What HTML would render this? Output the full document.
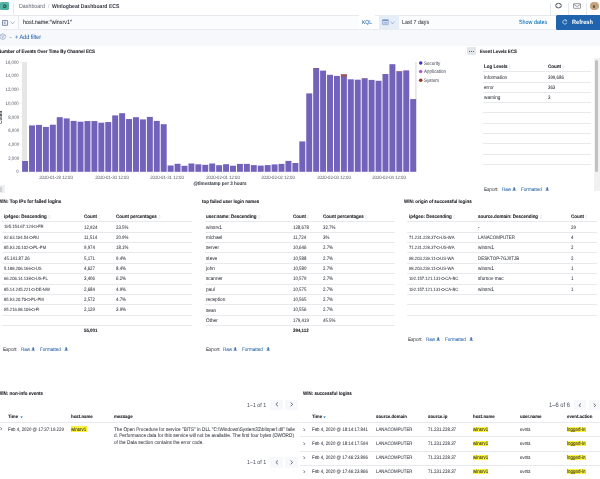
<!DOCTYPE html><html><head><meta charset="utf-8"><style>
html,body{margin:0;padding:0;}
html{background:#fff;}
body{width:600px;height:479px;overflow:hidden;position:relative;font-family:"Liberation Sans",sans-serif;text-rendering:geometricPrecision;}
#root{position:absolute;left:0;top:0;width:600px;height:479px;will-change:transform;}
.t{position:absolute;white-space:nowrap;}
.b{position:absolute;}
</style></head><body><div id="root">
<div class="b" style="left:0.00px;top:0.00px;width:600.00px;height:15.00px;background:#fff;"></div>
<div class="b" style="left:0.00px;top:15.00px;width:600.00px;height:1.00px;background:#e6e9ee;"></div>
<div class="b" style="left:0.00px;top:1.60px;width:8.75px;height:8.70px;background:#50b3a3;border-radius:1.3px;"></div>
<div class="t" style="left:-145.30px;width:300px;text-align:center;top:2.00px;line-height:10px;font-size:5.06px;color:#1a1c21;font-weight:700;transform:scaleX(0.9091);transform-origin:center center;">D</div>
<div class="b" style="left:13.10px;top:2.50px;width:0.65px;height:12.10px;background:#e4e8ef;"></div>
<div class="t" style="left:19.00px;top:2.00px;line-height:10px;font-size:5.94px;color:#69707d;-webkit-text-stroke:0.04px currentColor;transform:scaleX(0.8929);transform-origin:left center;">Dashboard</div>
<div class="t" style="left:47.60px;top:2.00px;line-height:10px;font-size:5.94px;color:#c2c7d0;-webkit-text-stroke:0.04px currentColor;transform:scaleX(0.8929);transform-origin:left center;">/</div>
<div class="t" style="left:51.90px;top:2.00px;line-height:10px;font-size:5.61px;color:#343741;font-weight:700;transform:scaleX(0.9091);transform-origin:left center;">Winlogbeat Dashboard ECS</div>
<div class="b" style="left:549.50px;top:2.50px;width:0.60px;height:12.10px;background:#e4e8ef;"></div>
<div class="b" style="left:567.50px;top:2.50px;width:0.60px;height:12.10px;background:#e4e8ef;"></div>
<div class="b" style="left:585.50px;top:2.50px;width:0.60px;height:12.10px;background:#e4e8ef;"></div>
<svg class="b" style="left:554px;top:2px" width="9" height="7" viewBox="0 0 9 7"><ellipse cx="4.5" cy="3.6" rx="2.9" ry="2.3" fill="none" stroke="#343741" stroke-width="0.8"/><path d="M2.2 2.3 L3.3 3 M6.8 2.3 L5.7 3 M2.2 4.9 L3.3 4.2 M6.8 4.9 L5.7 4.2" stroke="#343741" stroke-width="0.4"/></svg>
<svg class="b" style="left:572.5px;top:2.6px" width="8.4" height="6.4" viewBox="0 0 8.4 6.4"><rect x="0.6" y="0.7" width="7" height="4.6" rx="0.5" fill="none" stroke="#3f434c" stroke-width="0.55"/><polyline points="0.8,1.3 4.1,3.6 7.4,1.3" fill="none" stroke="#3f434c" stroke-width="0.55"/></svg>
<div class="b" style="left:589.90px;top:1.50px;width:8.80px;height:8.80px;background:#c4a37c;border-radius:50%;"></div>
<div class="t" style="left:444.30px;width:300px;text-align:center;top:2.00px;line-height:10px;font-size:5.15px;color:#1a1c21;-webkit-text-stroke:0.04px currentColor;transform:scaleX(0.8929);transform-origin:center center;">e</div>
<div class="b" style="left:0.00px;top:16.00px;width:600.00px;height:13.00px;background:#fff;"></div>
<div class="b" style="left:0.00px;top:16.00px;width:375.20px;height:13.00px;background:#fbfcfd;"></div>
<div class="b" style="left:0.00px;top:29.00px;width:600.00px;height:1.00px;background:#e9ecf0;"></div>
<div class="b" style="left:18.10px;top:15.40px;width:0.65px;height:13.20px;background:#e4e8ef;"></div>
<svg class="b" style="left:2px;top:19.6px" width="7" height="6" viewBox="0 0 7 6"><path d="M0.55 0.55 H5.6 V5.3 H0.55 Z" fill="none" stroke="#6a7ea6" stroke-width="0.9"/><path d="M2.3 1.6 L2.3 4.2 M2.3 3 L3.9 1.6 M2.6 2.8 L4.0 4.2" stroke="#6a7ea6" stroke-width="0.6" fill="none"/></svg>
<svg class="b" style="left:10px;top:20.8px" width="5" height="3.5" viewBox="0 0 5 3.5"><polyline points="0.5,0.6 2.5,2.8 4.5,0.6" fill="none" stroke="#6f87b0" stroke-width="0.6"/></svg>
<div class="t" style="left:22.90px;top:18.00px;line-height:10px;font-size:6.05px;color:#1a1c21;-webkit-text-stroke:0.04px currentColor;transform:scaleX(0.8929);transform-origin:left center;">host.name:&quot;winsrv1&quot;</div>
<div class="b" style="left:358.50px;top:15.40px;width:16.70px;height:13.20px;background:#fff;"></div>
<div class="t" style="left:216.90px;width:300px;text-align:center;top:18.00px;line-height:10px;font-size:5.6px;color:#2d6db0;-webkit-text-stroke:0.04px currentColor;transform:scaleX(0.8929);transform-origin:center center;">KQL</div>
<div class="b" style="left:378.50px;top:15.20px;width:20.50px;height:14.00px;background:#e6edf6;"></div>
<svg class="b" style="left:381.7px;top:19.3px" width="7" height="6.4" viewBox="0 0 7 6.4"><rect x="0.5" y="0.7" width="5.8" height="5" rx="0.4" fill="#d3dff0" stroke="#7497c6" stroke-width="0.6"/><rect x="0.5" y="0.7" width="5.8" height="1.3" fill="#7497c6"/><rect x="1.6" y="2.9" width="3.6" height="1.8" fill="#a9c0e0"/></svg>
<svg class="b" style="left:390px;top:20.8px" width="5" height="3.5" viewBox="0 0 5 3.5"><polyline points="0.5,0.6 2.5,2.8 4.5,0.6" fill="none" stroke="#6b8fc4" stroke-width="0.6"/></svg>
<div class="b" style="left:399.00px;top:16.00px;width:151.00px;height:13.00px;background:#fbfcfd;"></div>
<div class="t" style="left:401.70px;top:18.00px;line-height:10px;font-size:5.94px;color:#343741;-webkit-text-stroke:0.04px currentColor;transform:scaleX(0.8929);transform-origin:left center;">Last 7 days</div>
<div class="t" style="left:518.50px;top:18.00px;line-height:10px;font-size:6.05px;color:#006bb4;-webkit-text-stroke:0.04px currentColor;transform:scaleX(0.8929);transform-origin:left center;">Show dates</div>
<div class="b" style="left:556.00px;top:15.00px;width:46.00px;height:14.60px;background:#1f64ad;border-radius:1.6px;"></div>
<svg class="b" style="left:562.3px;top:19.3px" width="6" height="6" viewBox="0 0 6 6"><path d="M4.7 1.9 A2.1 2.1 0 1 0 4.9 3.6" fill="none" stroke="#fff" stroke-width="0.65"/><path d="M3.5 0.7 L4.9 1.8 L3.5 2.4" fill="none" stroke="#fff" stroke-width="0.55"/></svg>
<div class="t" style="left:571.70px;top:18.00px;line-height:10px;font-size:6.16px;color:#fff;font-weight:700;transform:scaleX(0.9091);transform-origin:left center;">Refresh</div>
<div class="b" style="left:0.00px;top:30.00px;width:600.00px;height:16.00px;background:#f7f8fb;"></div>
<svg class="b" style="left:-1px;top:33px" width="8" height="8" viewBox="0 0 8 8"><circle cx="3.8" cy="3.6" r="2.8" fill="none" stroke="#7d93b8" stroke-width="0.6"/><path d="M2.3 2.6 L5.3 2.6 L4.1 3.9 L4.1 5.2 L3.5 5.2 L3.5 3.9 Z" fill="none" stroke="#7d93b8" stroke-width="0.45"/></svg>
<div class="b" style="left:9.00px;top:36.60px;width:2.60px;height:0.30px;background:#c9d0da;"></div>
<div class="t" style="left:15.00px;top:33.00px;line-height:10px;font-size:6.16px;color:#2a64ab;-webkit-text-stroke:0.04px currentColor;transform:scaleX(0.8929);transform-origin:left center;">+ Add filter</div>
<div class="b" style="left:0.00px;top:46.00px;width:600.00px;height:433.00px;background:#fff;"></div>
<div class="t" style="left:-2.00px;top:48.00px;line-height:10px;font-size:4.9px;color:#1a1c21;font-weight:700;-webkit-text-stroke:0.08px currentColor;transform:scaleX(0.9091);transform-origin:left center;">Number of Events Over Time By Channel ECS</div>
<svg class="b" style="left:0;top:0" width="600" height="200" viewBox="0 0 600 200"><rect x="22.0" y="62.1" width="5.0" height="109.70" fill="#e6e6e6"/><rect x="415.1" y="62.1" width="1.6" height="109.70" fill="#e6e6e6"/><rect x="20.1" y="171.55" width="1.3" height="0.5" fill="#d6d6d6"/><rect x="20.1" y="157.84" width="1.3" height="0.5" fill="#d6d6d6"/><rect x="20.1" y="144.12" width="1.3" height="0.5" fill="#d6d6d6"/><rect x="20.1" y="130.41" width="1.3" height="0.5" fill="#d6d6d6"/><rect x="20.1" y="116.70" width="1.3" height="0.5" fill="#d6d6d6"/><rect x="20.1" y="102.99" width="1.3" height="0.5" fill="#d6d6d6"/><rect x="20.1" y="89.28" width="1.3" height="0.5" fill="#d6d6d6"/><rect x="20.1" y="75.56" width="1.3" height="0.5" fill="#d6d6d6"/><rect x="20.1" y="61.85" width="1.3" height="0.5" fill="#d6d6d6"/><rect x="56.20" y="171.80" width="0.5" height="1.2" fill="#d6d6d6"/><rect x="111.64" y="171.80" width="0.5" height="1.2" fill="#d6d6d6"/><rect x="167.08" y="171.80" width="0.5" height="1.2" fill="#d6d6d6"/><rect x="222.52" y="171.80" width="0.5" height="1.2" fill="#d6d6d6"/><rect x="277.96" y="171.80" width="0.5" height="1.2" fill="#d6d6d6"/><rect x="333.40" y="171.80" width="0.5" height="1.2" fill="#d6d6d6"/><rect x="388.84" y="171.80" width="0.5" height="1.2" fill="#d6d6d6"/><rect x="22.12" y="161.00" width="5.96" height="10.80" fill="#7262ba"/><rect x="29.05" y="125.40" width="5.96" height="46.40" fill="#7262ba"/><rect x="35.98" y="124.90" width="5.96" height="46.90" fill="#7262ba"/><rect x="42.91" y="126.90" width="5.96" height="44.90" fill="#7262ba"/><rect x="49.84" y="124.70" width="5.96" height="47.10" fill="#7262ba"/><rect x="56.77" y="117.20" width="5.96" height="54.60" fill="#7262ba"/><rect x="63.70" y="118.40" width="5.96" height="53.40" fill="#7262ba"/><rect x="70.63" y="120.90" width="5.96" height="50.90" fill="#7262ba"/><rect x="77.56" y="121.70" width="5.96" height="50.10" fill="#7262ba"/><rect x="84.49" y="121.05" width="5.96" height="50.75" fill="#7262ba"/><rect x="91.42" y="121.05" width="5.96" height="50.75" fill="#7262ba"/><rect x="98.35" y="122.70" width="5.96" height="49.10" fill="#7262ba"/><rect x="105.28" y="122.05" width="5.96" height="49.75" fill="#7262ba"/><rect x="112.21" y="115.40" width="5.96" height="56.40" fill="#7262ba"/><rect x="119.14" y="113.20" width="5.96" height="58.60" fill="#7262ba"/><rect x="126.07" y="119.05" width="5.96" height="52.75" fill="#7262ba"/><rect x="133.00" y="117.20" width="5.96" height="54.60" fill="#7262ba"/><rect x="139.93" y="119.40" width="5.96" height="52.40" fill="#7262ba"/><rect x="146.86" y="116.90" width="5.96" height="54.90" fill="#7262ba"/><rect x="153.79" y="120.90" width="5.96" height="50.90" fill="#7262ba"/><rect x="160.72" y="124.20" width="5.96" height="47.60" fill="#7262ba"/><rect x="167.65" y="165.50" width="5.96" height="6.30" fill="#7262ba"/><rect x="174.58" y="163.80" width="5.96" height="8.00" fill="#7262ba"/><rect x="181.51" y="165.80" width="5.96" height="6.00" fill="#7262ba"/><rect x="188.44" y="163.50" width="5.96" height="8.30" fill="#7262ba"/><rect x="195.37" y="164.30" width="5.96" height="7.50" fill="#7262ba"/><rect x="202.30" y="164.80" width="5.96" height="7.00" fill="#7262ba"/><rect x="209.23" y="163.50" width="5.96" height="8.30" fill="#7262ba"/><rect x="216.16" y="165.20" width="5.96" height="6.60" fill="#7262ba"/><rect x="223.09" y="164.20" width="5.96" height="7.60" fill="#7262ba"/><rect x="230.02" y="165.70" width="5.96" height="6.10" fill="#7262ba"/><rect x="236.95" y="163.90" width="5.96" height="7.90" fill="#7262ba"/><rect x="243.88" y="163.90" width="5.96" height="7.90" fill="#7262ba"/><rect x="250.81" y="165.10" width="5.96" height="6.70" fill="#7262ba"/><rect x="257.74" y="165.60" width="5.96" height="6.20" fill="#7262ba"/><rect x="264.67" y="165.10" width="5.96" height="6.70" fill="#7262ba"/><rect x="271.60" y="164.40" width="5.96" height="7.40" fill="#7262ba"/><rect x="278.53" y="163.90" width="5.96" height="7.90" fill="#7262ba"/><rect x="285.46" y="160.90" width="5.96" height="10.90" fill="#7262ba"/><rect x="292.39" y="163.00" width="5.96" height="8.80" fill="#7262ba"/><rect x="299.32" y="141.40" width="5.96" height="30.40" fill="#7262ba"/><rect x="306.25" y="93.40" width="5.96" height="78.40" fill="#7262ba"/><rect x="313.18" y="68.00" width="5.96" height="103.80" fill="#7262ba"/><rect x="320.11" y="70.65" width="5.96" height="101.15" fill="#7262ba"/><rect x="327.04" y="74.80" width="5.96" height="97.00" fill="#7262ba"/><rect x="333.97" y="75.90" width="5.96" height="95.90" fill="#7262ba"/><rect x="340.90" y="74.30" width="5.96" height="97.50" fill="#7262ba"/><rect x="347.83" y="79.30" width="5.96" height="92.50" fill="#7262ba"/><rect x="354.76" y="79.70" width="5.96" height="92.10" fill="#7262ba"/><rect x="361.69" y="78.30" width="5.96" height="93.50" fill="#7262ba"/><rect x="368.62" y="79.90" width="5.96" height="91.90" fill="#7262ba"/><rect x="375.55" y="80.80" width="5.96" height="91.00" fill="#7262ba"/><rect x="382.48" y="74.00" width="5.96" height="97.80" fill="#7262ba"/><rect x="389.41" y="64.20" width="5.96" height="107.60" fill="#7262ba"/><rect x="396.34" y="71.25" width="5.96" height="100.55" fill="#7262ba"/><rect x="403.27" y="70.40" width="5.96" height="101.40" fill="#7262ba"/><rect x="410.20" y="99.10" width="5.96" height="72.70" fill="#7262ba"/><rect x="340.90" y="74.50" width="5.96" height="2.00" fill="#a85545"/><rect x="313.18" y="68.00" width="5.96" height="0.40" fill="#a85545"/><rect x="361.69" y="78.30" width="5.96" height="0.35" fill="#a85545"/><rect x="396.34" y="71.25" width="5.96" height="0.35" fill="#a85545"/><circle cx="420.7" cy="62.9" r="1.75" fill="#4a2fb5"/><circle cx="420.7" cy="71.5" r="1.75" fill="#b15dc9"/><circle cx="420.7" cy="80.2" r="1.75" fill="#9b3128"/></svg>
<div class="t" style="right:581.10px;top:59.00px;line-height:10px;font-size:4.82px;color:#696e79;-webkit-text-stroke:0.04px currentColor;transform:scaleX(0.8929);transform-origin:right center;">16,000</div>
<div class="t" style="right:581.10px;top:72.00px;line-height:10px;font-size:4.82px;color:#696e79;-webkit-text-stroke:0.04px currentColor;transform:scaleX(0.8929);transform-origin:right center;">14,000</div>
<div class="t" style="right:581.10px;top:86.00px;line-height:10px;font-size:4.82px;color:#696e79;-webkit-text-stroke:0.04px currentColor;transform:scaleX(0.8929);transform-origin:right center;">12,000</div>
<div class="t" style="right:581.10px;top:100.00px;line-height:10px;font-size:4.82px;color:#696e79;-webkit-text-stroke:0.04px currentColor;transform:scaleX(0.8929);transform-origin:right center;">10,000</div>
<div class="t" style="right:581.10px;top:114.00px;line-height:10px;font-size:4.82px;color:#696e79;-webkit-text-stroke:0.04px currentColor;transform:scaleX(0.8929);transform-origin:right center;">8,000</div>
<div class="t" style="right:581.10px;top:127.00px;line-height:10px;font-size:4.82px;color:#696e79;-webkit-text-stroke:0.04px currentColor;transform:scaleX(0.8929);transform-origin:right center;">6,000</div>
<div class="t" style="right:581.10px;top:141.00px;line-height:10px;font-size:4.82px;color:#696e79;-webkit-text-stroke:0.04px currentColor;transform:scaleX(0.8929);transform-origin:right center;">4,000</div>
<div class="t" style="right:581.10px;top:155.00px;line-height:10px;font-size:4.82px;color:#696e79;-webkit-text-stroke:0.04px currentColor;transform:scaleX(0.8929);transform-origin:right center;">2,000</div>
<div class="t" style="right:581.10px;top:168.00px;line-height:10px;font-size:4.82px;color:#696e79;-webkit-text-stroke:0.04px currentColor;transform:scaleX(0.8929);transform-origin:right center;">0</div>
<div class="t" style="left:-93.55px;width:300px;text-align:center;top:174.00px;line-height:10px;font-size:4.78px;color:#696e79;-webkit-text-stroke:0.04px currentColor;transform:scaleX(0.8929);transform-origin:center center;">2020-01-29 12:00</div>
<div class="t" style="left:-38.11px;width:300px;text-align:center;top:174.00px;line-height:10px;font-size:4.78px;color:#696e79;-webkit-text-stroke:0.04px currentColor;transform:scaleX(0.8929);transform-origin:center center;">2020-01-30 12:00</div>
<div class="t" style="left:17.33px;width:300px;text-align:center;top:174.00px;line-height:10px;font-size:4.78px;color:#696e79;-webkit-text-stroke:0.04px currentColor;transform:scaleX(0.8929);transform-origin:center center;">2020-01-31 12:00</div>
<div class="t" style="left:72.77px;width:300px;text-align:center;top:174.00px;line-height:10px;font-size:4.78px;color:#696e79;-webkit-text-stroke:0.04px currentColor;transform:scaleX(0.8929);transform-origin:center center;">2020-02-01 12:00</div>
<div class="t" style="left:128.21px;width:300px;text-align:center;top:174.00px;line-height:10px;font-size:4.78px;color:#696e79;-webkit-text-stroke:0.04px currentColor;transform:scaleX(0.8929);transform-origin:center center;">2020-02-02 12:00</div>
<div class="t" style="left:183.65px;width:300px;text-align:center;top:174.00px;line-height:10px;font-size:4.78px;color:#696e79;-webkit-text-stroke:0.04px currentColor;transform:scaleX(0.8929);transform-origin:center center;">2020-02-03 12:00</div>
<div class="t" style="left:239.09px;width:300px;text-align:center;top:174.00px;line-height:10px;font-size:4.78px;color:#696e79;-webkit-text-stroke:0.04px currentColor;transform:scaleX(0.8929);transform-origin:center center;">2020-02-04 12:00</div>
<div class="t" style="left:69.50px;width:300px;text-align:center;top:179.00px;line-height:10px;font-size:5.0px;color:#454a55;font-weight:700;-webkit-text-stroke:0.08px currentColor;transform:scaleX(0.9091);transform-origin:center center;">@timestamp per 3 hours</div>
<svg class="b" style="left:0;top:100px" width="10" height="30" viewBox="0 0 10 30"><text x="0" y="0" transform="translate(2.3 17.2) rotate(-90)" text-anchor="middle" font-family="Liberation Sans" font-weight="700" font-size="4.5" fill="#343741">Count</text></svg>
<div class="t" style="left:424.00px;top:59.00px;line-height:10px;font-size:5.06px;color:#535966;-webkit-text-stroke:0.04px currentColor;transform:scaleX(0.8929);transform-origin:left center;">Security</div>
<div class="t" style="left:424.00px;top:67.00px;line-height:10px;font-size:5.06px;color:#535966;-webkit-text-stroke:0.04px currentColor;transform:scaleX(0.8929);transform-origin:left center;">Application</div>
<div class="t" style="left:424.00px;top:76.00px;line-height:10px;font-size:5.06px;color:#535966;-webkit-text-stroke:0.04px currentColor;transform:scaleX(0.8929);transform-origin:left center;">System</div>
<div class="b" style="left:467.00px;top:46.90px;width:8.75px;height:8.50px;background:#e3e6eb;border-radius:0.8px;"></div>
<div class="b" style="left:468.90px;top:50.55px;width:1.40px;height:1.30px;background:#535966;border-radius:0.3px;"></div>
<div class="b" style="left:470.80px;top:50.55px;width:1.40px;height:1.30px;background:#535966;border-radius:0.3px;"></div>
<div class="b" style="left:472.70px;top:50.55px;width:1.40px;height:1.30px;background:#535966;border-radius:0.3px;"></div>
<div class="b" style="left:0.00px;top:185.00px;width:5.00px;height:8.40px;background:#eceef2;border-radius:0.8px;"></div>
<div class="b" style="left:0.00px;top:186.80px;width:2.20px;height:4.80px;background:#cdd1d8;"></div>
<div class="t" style="left:479.80px;top:48.00px;line-height:10px;font-size:4.8px;color:#1a1c21;font-weight:700;-webkit-text-stroke:0.08px currentColor;transform:scaleX(0.9091);transform-origin:left center;">Event Levels ECS</div>
<div class="t" style="left:484.20px;top:63.00px;line-height:10px;font-size:4.95px;color:#1a1c21;font-weight:700;-webkit-text-stroke:0.08px currentColor;transform:scaleX(0.9091);transform-origin:left center;">Log Levels</div>
<svg class="b" style="left:509.01px;top:64.60px" width="2.4" height="4" viewBox="0 0 2.4 4"><path d="M0.3 1.5 L1.2 0.5 L2.1 1.5 M0.3 2.5 L1.2 3.5 L2.1 2.5" fill="none" stroke="#b3b9c2" stroke-width="0.45"/></svg>
<div class="t" style="left:548.00px;top:63.00px;line-height:10px;font-size:4.95px;color:#1a1c21;font-weight:700;-webkit-text-stroke:0.08px currentColor;transform:scaleX(0.9091);transform-origin:left center;">Count</div>
<svg class="b" style="left:562.29px;top:64.60px" width="2.4" height="4" viewBox="0 0 2.4 4"><path d="M0.3 1.5 L1.2 0.5 L2.1 1.5 M0.3 2.5 L1.2 3.5 L2.1 2.5" fill="none" stroke="#b3b9c2" stroke-width="0.45"/></svg>
<div class="b" style="left:482.60px;top:71.32px;width:108.30px;height:0.55px;background:#e7e9ed;"></div>
<div class="b" style="left:482.60px;top:81.61px;width:108.30px;height:0.55px;background:#e7e9ed;"></div>
<div class="b" style="left:482.60px;top:91.90px;width:108.30px;height:0.55px;background:#e7e9ed;"></div>
<div class="b" style="left:482.60px;top:102.19px;width:108.30px;height:0.55px;background:#e7e9ed;"></div>
<div class="b" style="left:482.60px;top:112.48px;width:108.30px;height:0.55px;background:#e7e9ed;"></div>
<div class="b" style="left:482.60px;top:122.77px;width:108.30px;height:0.55px;background:#e7e9ed;"></div>
<div class="b" style="left:482.60px;top:133.06px;width:108.30px;height:0.55px;background:#e7e9ed;"></div>
<div class="b" style="left:482.60px;top:143.35px;width:108.30px;height:0.55px;background:#e7e9ed;"></div>
<div class="b" style="left:482.60px;top:153.64px;width:108.30px;height:0.55px;background:#e7e9ed;"></div>
<div class="b" style="left:482.60px;top:163.93px;width:108.30px;height:0.55px;background:#e7e9ed;"></div>
<div class="t" style="left:484.20px;top:73.00px;line-height:10px;font-size:5.26px;color:#343741;-webkit-text-stroke:0.04px currentColor;transform:scaleX(0.8929);transform-origin:left center;">information</div>
<div class="t" style="left:548.00px;top:74.00px;line-height:10px;font-size:4.93px;color:#343741;-webkit-text-stroke:0.04px currentColor;transform:scaleX(0.8929);transform-origin:left center;">399,686</div>
<div class="t" style="left:484.20px;top:83.00px;line-height:10px;font-size:5.26px;color:#343741;-webkit-text-stroke:0.04px currentColor;transform:scaleX(0.8929);transform-origin:left center;">error</div>
<div class="t" style="left:548.00px;top:84.00px;line-height:10px;font-size:4.93px;color:#343741;-webkit-text-stroke:0.04px currentColor;transform:scaleX(0.8929);transform-origin:left center;">363</div>
<div class="t" style="left:484.20px;top:93.00px;line-height:10px;font-size:5.26px;color:#343741;-webkit-text-stroke:0.04px currentColor;transform:scaleX(0.8929);transform-origin:left center;">warning</div>
<div class="t" style="left:548.00px;top:94.00px;line-height:10px;font-size:4.93px;color:#343741;-webkit-text-stroke:0.04px currentColor;transform:scaleX(0.8929);transform-origin:left center;">3</div>
<div class="t" style="left:484.00px;top:185.00px;line-height:10px;font-size:5.15px;color:#3f434c;-webkit-text-stroke:0.04px currentColor;transform:scaleX(0.8929);transform-origin:left center;">Export:</div>
<div class="t" style="left:501.60px;top:185.00px;line-height:10px;font-size:5.15px;color:#2562a8;-webkit-text-stroke:0.04px currentColor;transform:scaleX(0.8929);transform-origin:left center;">Raw</div>
<svg class="b" style="left:511.60px;top:186.70px" width="4.4" height="4.4" viewBox="0 0 4.4 4.4"><path d="M1.6 0.3 H2.8 V1.7 H3.9 L2.2 3.3 L0.5 1.7 H1.6 Z" fill="#2562a8"/><rect x="0.4" y="3.5" width="3.6" height="0.75" fill="#2562a8"/></svg>
<div class="t" style="left:520.80px;top:185.00px;line-height:10px;font-size:5.15px;color:#2562a8;-webkit-text-stroke:0.04px currentColor;transform:scaleX(0.8929);transform-origin:left center;">Formatted</div>
<svg class="b" style="left:544.60px;top:186.70px" width="4.4" height="4.4" viewBox="0 0 4.4 4.4"><path d="M1.6 0.3 H2.8 V1.7 H3.9 L2.2 3.3 L0.5 1.7 H1.6 Z" fill="#2562a8"/><rect x="0.4" y="3.5" width="3.6" height="0.75" fill="#2562a8"/></svg>
<div class="b" style="left:594.00px;top:58.10px;width:6.00px;height:133.40px;background:#f1f1f1;"></div>
<div class="b" style="left:595.30px;top:59.70px;width:3.10px;height:112.60px;background:#c1c1c1;border-radius:1.5px;"></div>
<div class="t" style="left:-2.00px;top:197.00px;line-height:10px;font-size:5.06px;color:#1a1c21;font-weight:700;-webkit-text-stroke:0.08px currentColor;transform:scaleX(0.9091);transform-origin:left center;">WIN: Top IPs for failed logins</div>
<div class="t" style="left:201.90px;top:198.00px;line-height:10px;font-size:4.87px;color:#1a1c21;font-weight:700;-webkit-text-stroke:0.08px currentColor;transform:scaleX(0.9091);transform-origin:left center;">top failed user login names</div>
<div class="t" style="left:403.90px;top:198.00px;line-height:10px;font-size:4.9px;color:#1a1c21;font-weight:700;-webkit-text-stroke:0.08px currentColor;transform:scaleX(0.9091);transform-origin:left center;">WIN: origin of successful logins</div>
<div class="t" style="left:4.20px;top:213.00px;line-height:10px;font-size:4.95px;color:#1a1c21;font-weight:700;-webkit-text-stroke:0.08px currentColor;transform:scaleX(0.9091);transform-origin:left center;">ip4geo: Descending</div>
<svg class="b" style="left:48.26px;top:214.80px" width="2.4" height="4" viewBox="0 0 2.4 4"><path d="M0.3 1.5 L1.2 0.5 L2.1 1.5 M0.3 2.5 L1.2 3.5 L2.1 2.5" fill="none" stroke="#b3b9c2" stroke-width="0.45"/></svg>
<div class="t" style="left:83.70px;top:213.00px;line-height:10px;font-size:4.95px;color:#1a1c21;font-weight:700;-webkit-text-stroke:0.08px currentColor;transform:scaleX(0.9091);transform-origin:left center;">Count</div>
<svg class="b" style="left:97.99px;top:214.80px" width="2.4" height="4" viewBox="0 0 2.4 4"><path d="M0.3 1.5 L1.2 0.5 L2.1 1.5 M0.3 2.5 L1.2 3.5 L2.1 2.5" fill="none" stroke="#b3b9c2" stroke-width="0.45"/></svg>
<div class="t" style="left:116.30px;top:213.00px;line-height:10px;font-size:4.95px;color:#1a1c21;font-weight:700;-webkit-text-stroke:0.08px currentColor;transform:scaleX(0.9091);transform-origin:left center;">Count percentages</div>
<svg class="b" style="left:158.36px;top:214.80px" width="2.4" height="4" viewBox="0 0 2.4 4"><path d="M0.3 1.5 L1.2 0.5 L2.1 1.5 M0.3 2.5 L1.2 3.5 L2.1 2.5" fill="none" stroke="#b3b9c2" stroke-width="0.45"/></svg>
<div class="b" style="left:1.75px;top:221.32px;width:189.75px;height:0.55px;background:#e7e9ed;"></div>
<div class="b" style="left:1.75px;top:231.69px;width:189.75px;height:0.55px;background:#e7e9ed;"></div>
<div class="b" style="left:1.75px;top:242.06px;width:189.75px;height:0.55px;background:#e7e9ed;"></div>
<div class="b" style="left:1.75px;top:252.43px;width:189.75px;height:0.55px;background:#e7e9ed;"></div>
<div class="b" style="left:1.75px;top:262.81px;width:189.75px;height:0.55px;background:#e7e9ed;"></div>
<div class="b" style="left:1.75px;top:273.18px;width:189.75px;height:0.55px;background:#e7e9ed;"></div>
<div class="b" style="left:1.75px;top:283.55px;width:189.75px;height:0.55px;background:#e7e9ed;"></div>
<div class="b" style="left:1.75px;top:293.92px;width:189.75px;height:0.55px;background:#e7e9ed;"></div>
<div class="b" style="left:1.75px;top:304.29px;width:189.75px;height:0.55px;background:#e7e9ed;"></div>
<div class="b" style="left:1.75px;top:314.66px;width:189.75px;height:0.55px;background:#e7e9ed;"></div>
<div class="b" style="left:1.75px;top:325.02px;width:189.75px;height:0.55px;background:#e7e9ed;"></div>
<div class="t" style="left:4.20px;top:222.00px;line-height:10px;font-size:4.7px;color:#343741;-webkit-text-stroke:0.04px currentColor;transform:scaleX(0.8929);transform-origin:left center;">195.154.67.124&lt;&gt;FR</div>
<div class="t" style="left:83.70px;top:224.00px;line-height:10px;font-size:4.93px;color:#343741;-webkit-text-stroke:0.04px currentColor;transform:scaleX(0.8929);transform-origin:left center;">12,924</div>
<div class="t" style="left:116.30px;top:224.00px;line-height:10px;font-size:4.93px;color:#343741;-webkit-text-stroke:0.04px currentColor;transform:scaleX(0.8929);transform-origin:left center;">23.5%</div>
<div class="t" style="left:4.20px;top:233.00px;line-height:10px;font-size:4.7px;color:#343741;-webkit-text-stroke:0.04px currentColor;transform:scaleX(0.8929);transform-origin:left center;">92.63.194.54&lt;&gt;RU</div>
<div class="t" style="left:83.70px;top:234.00px;line-height:10px;font-size:4.93px;color:#343741;-webkit-text-stroke:0.04px currentColor;transform:scaleX(0.8929);transform-origin:left center;">11,514</div>
<div class="t" style="left:116.30px;top:234.00px;line-height:10px;font-size:4.93px;color:#343741;-webkit-text-stroke:0.04px currentColor;transform:scaleX(0.8929);transform-origin:left center;">20.9%</div>
<div class="t" style="left:4.20px;top:243.00px;line-height:10px;font-size:4.7px;color:#343741;-webkit-text-stroke:0.04px currentColor;transform:scaleX(0.8929);transform-origin:left center;">85.93.20.102&lt;&gt;PL-PM</div>
<div class="t" style="left:83.70px;top:244.00px;line-height:10px;font-size:4.93px;color:#343741;-webkit-text-stroke:0.04px currentColor;transform:scaleX(0.8929);transform-origin:left center;">9,974</div>
<div class="t" style="left:116.30px;top:244.00px;line-height:10px;font-size:4.93px;color:#343741;-webkit-text-stroke:0.04px currentColor;transform:scaleX(0.8929);transform-origin:left center;">18.1%</div>
<div class="t" style="left:4.20px;top:255.00px;line-height:10px;font-size:4.93px;color:#343741;-webkit-text-stroke:0.04px currentColor;transform:scaleX(0.8929);transform-origin:left center;">45.141.87.26</div>
<div class="t" style="left:83.70px;top:255.00px;line-height:10px;font-size:4.93px;color:#343741;-webkit-text-stroke:0.04px currentColor;transform:scaleX(0.8929);transform-origin:left center;">5,171</div>
<div class="t" style="left:116.30px;top:255.00px;line-height:10px;font-size:4.93px;color:#343741;-webkit-text-stroke:0.04px currentColor;transform:scaleX(0.8929);transform-origin:left center;">9.4%</div>
<div class="t" style="left:4.20px;top:264.00px;line-height:10px;font-size:4.7px;color:#343741;-webkit-text-stroke:0.04px currentColor;transform:scaleX(0.8929);transform-origin:left center;">5.188.206.166&lt;&gt;US</div>
<div class="t" style="left:83.70px;top:265.00px;line-height:10px;font-size:4.93px;color:#343741;-webkit-text-stroke:0.04px currentColor;transform:scaleX(0.8929);transform-origin:left center;">4,627</div>
<div class="t" style="left:116.30px;top:265.00px;line-height:10px;font-size:4.93px;color:#343741;-webkit-text-stroke:0.04px currentColor;transform:scaleX(0.8929);transform-origin:left center;">8.4%</div>
<div class="t" style="left:4.20px;top:274.00px;line-height:10px;font-size:4.7px;color:#343741;-webkit-text-stroke:0.04px currentColor;transform:scaleX(0.8929);transform-origin:left center;">66.206.14.138&lt;&gt;US-FL</div>
<div class="t" style="left:83.70px;top:275.00px;line-height:10px;font-size:4.93px;color:#343741;-webkit-text-stroke:0.04px currentColor;transform:scaleX(0.8929);transform-origin:left center;">3,406</div>
<div class="t" style="left:116.30px;top:275.00px;line-height:10px;font-size:4.93px;color:#343741;-webkit-text-stroke:0.04px currentColor;transform:scaleX(0.8929);transform-origin:left center;">6.2%</div>
<div class="t" style="left:4.20px;top:285.00px;line-height:10px;font-size:4.7px;color:#343741;-webkit-text-stroke:0.04px currentColor;transform:scaleX(0.8929);transform-origin:left center;">85.14.245.221&lt;&gt;DE-NW</div>
<div class="t" style="left:83.70px;top:286.00px;line-height:10px;font-size:4.93px;color:#343741;-webkit-text-stroke:0.04px currentColor;transform:scaleX(0.8929);transform-origin:left center;">2,684</div>
<div class="t" style="left:116.30px;top:286.00px;line-height:10px;font-size:4.93px;color:#343741;-webkit-text-stroke:0.04px currentColor;transform:scaleX(0.8929);transform-origin:left center;">4.9%</div>
<div class="t" style="left:4.20px;top:295.00px;line-height:10px;font-size:4.7px;color:#343741;-webkit-text-stroke:0.04px currentColor;transform:scaleX(0.8929);transform-origin:left center;">85.93.20.70&lt;&gt;PL-PM</div>
<div class="t" style="left:83.70px;top:296.00px;line-height:10px;font-size:4.93px;color:#343741;-webkit-text-stroke:0.04px currentColor;transform:scaleX(0.8929);transform-origin:left center;">2,572</div>
<div class="t" style="left:116.30px;top:296.00px;line-height:10px;font-size:4.93px;color:#343741;-webkit-text-stroke:0.04px currentColor;transform:scaleX(0.8929);transform-origin:left center;">4.7%</div>
<div class="t" style="left:4.20px;top:305.00px;line-height:10px;font-size:4.7px;color:#343741;-webkit-text-stroke:0.04px currentColor;transform:scaleX(0.8929);transform-origin:left center;">95.216.98.106&lt;&gt;FI</div>
<div class="t" style="left:83.70px;top:306.00px;line-height:10px;font-size:4.93px;color:#343741;-webkit-text-stroke:0.04px currentColor;transform:scaleX(0.8929);transform-origin:left center;">2,129</div>
<div class="t" style="left:116.30px;top:306.00px;line-height:10px;font-size:4.93px;color:#343741;-webkit-text-stroke:0.04px currentColor;transform:scaleX(0.8929);transform-origin:left center;">3.9%</div>
<div class="t" style="left:83.70px;top:327.00px;line-height:10px;font-size:4.84px;color:#1a1c21;font-weight:700;-webkit-text-stroke:0.08px currentColor;transform:scaleX(0.9091);transform-origin:left center;">55,001</div>
<div class="t" style="left:3.30px;top:345.00px;line-height:10px;font-size:5.15px;color:#3f434c;-webkit-text-stroke:0.04px currentColor;transform:scaleX(0.8929);transform-origin:left center;">Export:</div>
<div class="t" style="left:20.90px;top:345.00px;line-height:10px;font-size:5.15px;color:#2562a8;-webkit-text-stroke:0.04px currentColor;transform:scaleX(0.8929);transform-origin:left center;">Raw</div>
<svg class="b" style="left:30.90px;top:347.10px" width="4.4" height="4.4" viewBox="0 0 4.4 4.4"><path d="M1.6 0.3 H2.8 V1.7 H3.9 L2.2 3.3 L0.5 1.7 H1.6 Z" fill="#2562a8"/><rect x="0.4" y="3.5" width="3.6" height="0.75" fill="#2562a8"/></svg>
<div class="t" style="left:40.10px;top:345.00px;line-height:10px;font-size:5.15px;color:#2562a8;-webkit-text-stroke:0.04px currentColor;transform:scaleX(0.8929);transform-origin:left center;">Formatted</div>
<svg class="b" style="left:63.90px;top:347.10px" width="4.4" height="4.4" viewBox="0 0 4.4 4.4"><path d="M1.6 0.3 H2.8 V1.7 H3.9 L2.2 3.3 L0.5 1.7 H1.6 Z" fill="#2562a8"/><rect x="0.4" y="3.5" width="3.6" height="0.75" fill="#2562a8"/></svg>
<div class="t" style="left:206.40px;top:213.00px;line-height:10px;font-size:4.95px;color:#1a1c21;font-weight:700;-webkit-text-stroke:0.08px currentColor;transform:scaleX(0.9091);transform-origin:left center;">user.name: Descending</div>
<svg class="b" style="left:258.22px;top:214.80px" width="2.4" height="4" viewBox="0 0 2.4 4"><path d="M0.3 1.5 L1.2 0.5 L2.1 1.5 M0.3 2.5 L1.2 3.5 L2.1 2.5" fill="none" stroke="#b3b9c2" stroke-width="0.45"/></svg>
<div class="t" style="left:292.60px;top:213.00px;line-height:10px;font-size:4.95px;color:#1a1c21;font-weight:700;-webkit-text-stroke:0.08px currentColor;transform:scaleX(0.9091);transform-origin:left center;">Count</div>
<svg class="b" style="left:306.89px;top:214.80px" width="2.4" height="4" viewBox="0 0 2.4 4"><path d="M0.3 1.5 L1.2 0.5 L2.1 1.5 M0.3 2.5 L1.2 3.5 L2.1 2.5" fill="none" stroke="#b3b9c2" stroke-width="0.45"/></svg>
<div class="t" style="left:323.40px;top:213.00px;line-height:10px;font-size:4.95px;color:#1a1c21;font-weight:700;-webkit-text-stroke:0.08px currentColor;transform:scaleX(0.9091);transform-origin:left center;">Count percentages</div>
<svg class="b" style="left:365.46px;top:214.80px" width="2.4" height="4" viewBox="0 0 2.4 4"><path d="M0.3 1.5 L1.2 0.5 L2.1 1.5 M0.3 2.5 L1.2 3.5 L2.1 2.5" fill="none" stroke="#b3b9c2" stroke-width="0.45"/></svg>
<div class="b" style="left:204.60px;top:221.32px;width:190.40px;height:0.55px;background:#e7e9ed;"></div>
<div class="b" style="left:204.60px;top:231.69px;width:190.40px;height:0.55px;background:#e7e9ed;"></div>
<div class="b" style="left:204.60px;top:242.06px;width:190.40px;height:0.55px;background:#e7e9ed;"></div>
<div class="b" style="left:204.60px;top:252.43px;width:190.40px;height:0.55px;background:#e7e9ed;"></div>
<div class="b" style="left:204.60px;top:262.81px;width:190.40px;height:0.55px;background:#e7e9ed;"></div>
<div class="b" style="left:204.60px;top:273.18px;width:190.40px;height:0.55px;background:#e7e9ed;"></div>
<div class="b" style="left:204.60px;top:283.55px;width:190.40px;height:0.55px;background:#e7e9ed;"></div>
<div class="b" style="left:204.60px;top:293.92px;width:190.40px;height:0.55px;background:#e7e9ed;"></div>
<div class="b" style="left:204.60px;top:304.29px;width:190.40px;height:0.55px;background:#e7e9ed;"></div>
<div class="b" style="left:204.60px;top:314.66px;width:190.40px;height:0.55px;background:#e7e9ed;"></div>
<div class="b" style="left:204.60px;top:325.02px;width:190.40px;height:0.55px;background:#e7e9ed;"></div>
<div class="t" style="left:206.40px;top:223.00px;line-height:10px;font-size:5.26px;color:#343741;-webkit-text-stroke:0.04px currentColor;transform:scaleX(0.8929);transform-origin:left center;">winsrv1</div>
<div class="t" style="left:292.60px;top:224.00px;line-height:10px;font-size:4.93px;color:#343741;-webkit-text-stroke:0.04px currentColor;transform:scaleX(0.8929);transform-origin:left center;">128,678</div>
<div class="t" style="left:323.40px;top:224.00px;line-height:10px;font-size:4.93px;color:#343741;-webkit-text-stroke:0.04px currentColor;transform:scaleX(0.8929);transform-origin:left center;">32.7%</div>
<div class="t" style="left:206.40px;top:233.00px;line-height:10px;font-size:5.26px;color:#343741;-webkit-text-stroke:0.04px currentColor;transform:scaleX(0.8929);transform-origin:left center;">michael</div>
<div class="t" style="left:292.60px;top:234.00px;line-height:10px;font-size:4.93px;color:#343741;-webkit-text-stroke:0.04px currentColor;transform:scaleX(0.8929);transform-origin:left center;">11,724</div>
<div class="t" style="left:323.40px;top:234.00px;line-height:10px;font-size:4.93px;color:#343741;-webkit-text-stroke:0.04px currentColor;transform:scaleX(0.8929);transform-origin:left center;">3%</div>
<div class="t" style="left:206.40px;top:243.00px;line-height:10px;font-size:5.26px;color:#343741;-webkit-text-stroke:0.04px currentColor;transform:scaleX(0.8929);transform-origin:left center;">server</div>
<div class="t" style="left:292.60px;top:244.00px;line-height:10px;font-size:4.93px;color:#343741;-webkit-text-stroke:0.04px currentColor;transform:scaleX(0.8929);transform-origin:left center;">10,646</div>
<div class="t" style="left:323.40px;top:244.00px;line-height:10px;font-size:4.93px;color:#343741;-webkit-text-stroke:0.04px currentColor;transform:scaleX(0.8929);transform-origin:left center;">2.7%</div>
<div class="t" style="left:206.40px;top:254.00px;line-height:10px;font-size:5.26px;color:#343741;-webkit-text-stroke:0.04px currentColor;transform:scaleX(0.8929);transform-origin:left center;">steve</div>
<div class="t" style="left:292.60px;top:255.00px;line-height:10px;font-size:4.93px;color:#343741;-webkit-text-stroke:0.04px currentColor;transform:scaleX(0.8929);transform-origin:left center;">10,588</div>
<div class="t" style="left:323.40px;top:255.00px;line-height:10px;font-size:4.93px;color:#343741;-webkit-text-stroke:0.04px currentColor;transform:scaleX(0.8929);transform-origin:left center;">2.7%</div>
<div class="t" style="left:206.40px;top:264.00px;line-height:10px;font-size:5.26px;color:#343741;-webkit-text-stroke:0.04px currentColor;transform:scaleX(0.8929);transform-origin:left center;">john</div>
<div class="t" style="left:292.60px;top:265.00px;line-height:10px;font-size:4.93px;color:#343741;-webkit-text-stroke:0.04px currentColor;transform:scaleX(0.8929);transform-origin:left center;">10,580</div>
<div class="t" style="left:323.40px;top:265.00px;line-height:10px;font-size:4.93px;color:#343741;-webkit-text-stroke:0.04px currentColor;transform:scaleX(0.8929);transform-origin:left center;">2.7%</div>
<div class="t" style="left:206.40px;top:274.00px;line-height:10px;font-size:5.26px;color:#343741;-webkit-text-stroke:0.04px currentColor;transform:scaleX(0.8929);transform-origin:left center;">scanner</div>
<div class="t" style="left:292.60px;top:275.00px;line-height:10px;font-size:4.93px;color:#343741;-webkit-text-stroke:0.04px currentColor;transform:scaleX(0.8929);transform-origin:left center;">10,579</div>
<div class="t" style="left:323.40px;top:275.00px;line-height:10px;font-size:4.93px;color:#343741;-webkit-text-stroke:0.04px currentColor;transform:scaleX(0.8929);transform-origin:left center;">2.7%</div>
<div class="t" style="left:206.40px;top:285.00px;line-height:10px;font-size:5.26px;color:#343741;-webkit-text-stroke:0.04px currentColor;transform:scaleX(0.8929);transform-origin:left center;">paul</div>
<div class="t" style="left:292.60px;top:286.00px;line-height:10px;font-size:4.93px;color:#343741;-webkit-text-stroke:0.04px currentColor;transform:scaleX(0.8929);transform-origin:left center;">10,575</div>
<div class="t" style="left:323.40px;top:286.00px;line-height:10px;font-size:4.93px;color:#343741;-webkit-text-stroke:0.04px currentColor;transform:scaleX(0.8929);transform-origin:left center;">2.7%</div>
<div class="t" style="left:206.40px;top:295.00px;line-height:10px;font-size:5.26px;color:#343741;-webkit-text-stroke:0.04px currentColor;transform:scaleX(0.8929);transform-origin:left center;">reception</div>
<div class="t" style="left:292.60px;top:296.00px;line-height:10px;font-size:4.93px;color:#343741;-webkit-text-stroke:0.04px currentColor;transform:scaleX(0.8929);transform-origin:left center;">10,565</div>
<div class="t" style="left:323.40px;top:296.00px;line-height:10px;font-size:4.93px;color:#343741;-webkit-text-stroke:0.04px currentColor;transform:scaleX(0.8929);transform-origin:left center;">2.7%</div>
<div class="t" style="left:206.40px;top:306.00px;line-height:10px;font-size:5.26px;color:#343741;-webkit-text-stroke:0.04px currentColor;transform:scaleX(0.8929);transform-origin:left center;">sean</div>
<div class="t" style="left:292.60px;top:306.00px;line-height:10px;font-size:4.93px;color:#343741;-webkit-text-stroke:0.04px currentColor;transform:scaleX(0.8929);transform-origin:left center;">10,556</div>
<div class="t" style="left:323.40px;top:306.00px;line-height:10px;font-size:4.93px;color:#343741;-webkit-text-stroke:0.04px currentColor;transform:scaleX(0.8929);transform-origin:left center;">2.7%</div>
<div class="t" style="left:206.40px;top:316.00px;line-height:10px;font-size:5.26px;color:#343741;-webkit-text-stroke:0.04px currentColor;transform:scaleX(0.8929);transform-origin:left center;">Other</div>
<div class="t" style="left:292.60px;top:317.00px;line-height:10px;font-size:4.93px;color:#343741;-webkit-text-stroke:0.04px currentColor;transform:scaleX(0.8929);transform-origin:left center;">179,419</div>
<div class="t" style="left:323.40px;top:317.00px;line-height:10px;font-size:4.93px;color:#343741;-webkit-text-stroke:0.04px currentColor;transform:scaleX(0.8929);transform-origin:left center;">45.5%</div>
<div class="t" style="left:292.60px;top:327.00px;line-height:10px;font-size:4.84px;color:#1a1c21;font-weight:700;-webkit-text-stroke:0.08px currentColor;transform:scaleX(0.9091);transform-origin:left center;">394,112</div>
<div class="t" style="left:205.60px;top:345.00px;line-height:10px;font-size:5.15px;color:#3f434c;-webkit-text-stroke:0.04px currentColor;transform:scaleX(0.8929);transform-origin:left center;">Export:</div>
<div class="t" style="left:223.20px;top:345.00px;line-height:10px;font-size:5.15px;color:#2562a8;-webkit-text-stroke:0.04px currentColor;transform:scaleX(0.8929);transform-origin:left center;">Raw</div>
<svg class="b" style="left:233.20px;top:347.10px" width="4.4" height="4.4" viewBox="0 0 4.4 4.4"><path d="M1.6 0.3 H2.8 V1.7 H3.9 L2.2 3.3 L0.5 1.7 H1.6 Z" fill="#2562a8"/><rect x="0.4" y="3.5" width="3.6" height="0.75" fill="#2562a8"/></svg>
<div class="t" style="left:242.40px;top:345.00px;line-height:10px;font-size:5.15px;color:#2562a8;-webkit-text-stroke:0.04px currentColor;transform:scaleX(0.8929);transform-origin:left center;">Formatted</div>
<svg class="b" style="left:266.20px;top:347.10px" width="4.4" height="4.4" viewBox="0 0 4.4 4.4"><path d="M1.6 0.3 H2.8 V1.7 H3.9 L2.2 3.3 L0.5 1.7 H1.6 Z" fill="#2562a8"/><rect x="0.4" y="3.5" width="3.6" height="0.75" fill="#2562a8"/></svg>
<div class="t" style="left:408.50px;top:213.00px;line-height:10px;font-size:4.95px;color:#1a1c21;font-weight:700;-webkit-text-stroke:0.08px currentColor;transform:scaleX(0.9091);transform-origin:left center;">ip4geo: Descending</div>
<svg class="b" style="left:452.56px;top:214.80px" width="2.4" height="4" viewBox="0 0 2.4 4"><path d="M0.3 1.5 L1.2 0.5 L2.1 1.5 M0.3 2.5 L1.2 3.5 L2.1 2.5" fill="none" stroke="#b3b9c2" stroke-width="0.45"/></svg>
<div class="t" style="left:478.30px;top:213.00px;line-height:10px;font-size:4.95px;color:#1a1c21;font-weight:700;-webkit-text-stroke:0.08px currentColor;transform:scaleX(0.9091);transform-origin:left center;">source.domain: Descending</div>
<svg class="b" style="left:539.86px;top:214.80px" width="2.4" height="4" viewBox="0 0 2.4 4"><path d="M0.3 1.5 L1.2 0.5 L2.1 1.5 M0.3 2.5 L1.2 3.5 L2.1 2.5" fill="none" stroke="#b3b9c2" stroke-width="0.45"/></svg>
<div class="t" style="left:570.60px;top:213.00px;line-height:10px;font-size:4.95px;color:#1a1c21;font-weight:700;-webkit-text-stroke:0.08px currentColor;transform:scaleX(0.9091);transform-origin:left center;">Count</div>
<svg class="b" style="left:584.89px;top:214.80px" width="2.4" height="4" viewBox="0 0 2.4 4"><path d="M0.3 1.5 L1.2 0.5 L2.1 1.5 M0.3 2.5 L1.2 3.5 L2.1 2.5" fill="none" stroke="#b3b9c2" stroke-width="0.45"/></svg>
<div class="b" style="left:406.70px;top:221.32px;width:190.30px;height:0.55px;background:#e7e9ed;"></div>
<div class="b" style="left:406.70px;top:231.69px;width:190.30px;height:0.55px;background:#e7e9ed;"></div>
<div class="b" style="left:406.70px;top:242.06px;width:190.30px;height:0.55px;background:#e7e9ed;"></div>
<div class="b" style="left:406.70px;top:252.43px;width:190.30px;height:0.55px;background:#e7e9ed;"></div>
<div class="b" style="left:406.70px;top:262.81px;width:190.30px;height:0.55px;background:#e7e9ed;"></div>
<div class="b" style="left:406.70px;top:273.18px;width:190.30px;height:0.55px;background:#e7e9ed;"></div>
<div class="b" style="left:406.70px;top:283.55px;width:190.30px;height:0.55px;background:#e7e9ed;"></div>
<div class="b" style="left:406.70px;top:293.92px;width:190.30px;height:0.55px;background:#e7e9ed;"></div>
<div class="b" style="left:406.70px;top:304.29px;width:190.30px;height:0.55px;background:#e7e9ed;"></div>
<div class="b" style="left:406.70px;top:314.66px;width:190.30px;height:0.55px;background:#e7e9ed;"></div>
<div class="t" style="left:478.30px;top:223.00px;line-height:10px;font-size:4.98px;color:#343741;-webkit-text-stroke:0.04px currentColor;transform:scaleX(0.8929);transform-origin:left center;">-</div>
<div class="t" style="left:570.60px;top:224.00px;line-height:10px;font-size:4.93px;color:#343741;-webkit-text-stroke:0.04px currentColor;transform:scaleX(0.8929);transform-origin:left center;">29</div>
<div class="t" style="left:408.50px;top:233.00px;line-height:10px;font-size:4.7px;color:#343741;-webkit-text-stroke:0.04px currentColor;transform:scaleX(0.8929);transform-origin:left center;">71.231.228.37&lt;&gt;US-WA</div>
<div class="t" style="left:478.30px;top:233.00px;line-height:10px;font-size:4.98px;color:#343741;-webkit-text-stroke:0.04px currentColor;transform:scaleX(0.8929);transform-origin:left center;">LANACOMPUTER</div>
<div class="t" style="left:570.60px;top:234.00px;line-height:10px;font-size:4.93px;color:#343741;-webkit-text-stroke:0.04px currentColor;transform:scaleX(0.8929);transform-origin:left center;">4</div>
<div class="t" style="left:408.50px;top:243.00px;line-height:10px;font-size:4.7px;color:#343741;-webkit-text-stroke:0.04px currentColor;transform:scaleX(0.8929);transform-origin:left center;">71.231.228.37&lt;&gt;US-WA</div>
<div class="t" style="left:478.30px;top:243.00px;line-height:10px;font-size:5.26px;color:#343741;-webkit-text-stroke:0.04px currentColor;transform:scaleX(0.8929);transform-origin:left center;">winsrv1</div>
<div class="t" style="left:570.60px;top:244.00px;line-height:10px;font-size:4.93px;color:#343741;-webkit-text-stroke:0.04px currentColor;transform:scaleX(0.8929);transform-origin:left center;">2</div>
<div class="t" style="left:408.50px;top:254.00px;line-height:10px;font-size:4.7px;color:#343741;-webkit-text-stroke:0.04px currentColor;transform:scaleX(0.8929);transform-origin:left center;">98.203.239.11&lt;&gt;US-WA</div>
<div class="t" style="left:478.30px;top:254.00px;line-height:10px;font-size:4.98px;color:#343741;-webkit-text-stroke:0.04px currentColor;transform:scaleX(0.8929);transform-origin:left center;">DESKTOP-7GJ0TJB</div>
<div class="t" style="left:570.60px;top:255.00px;line-height:10px;font-size:4.93px;color:#343741;-webkit-text-stroke:0.04px currentColor;transform:scaleX(0.8929);transform-origin:left center;">2</div>
<div class="t" style="left:408.50px;top:264.00px;line-height:10px;font-size:4.7px;color:#343741;-webkit-text-stroke:0.04px currentColor;transform:scaleX(0.8929);transform-origin:left center;">98.203.239.11&lt;&gt;US-WA</div>
<div class="t" style="left:478.30px;top:264.00px;line-height:10px;font-size:5.26px;color:#343741;-webkit-text-stroke:0.04px currentColor;transform:scaleX(0.8929);transform-origin:left center;">winsrv1</div>
<div class="t" style="left:570.60px;top:265.00px;line-height:10px;font-size:4.93px;color:#343741;-webkit-text-stroke:0.04px currentColor;transform:scaleX(0.8929);transform-origin:left center;">1</div>
<div class="t" style="left:408.50px;top:274.00px;line-height:10px;font-size:4.7px;color:#343741;-webkit-text-stroke:0.04px currentColor;transform:scaleX(0.8929);transform-origin:left center;">192.157.121.131&lt;&gt;CA-BC</div>
<div class="t" style="left:478.30px;top:274.00px;line-height:10px;font-size:5.26px;color:#343741;-webkit-text-stroke:0.04px currentColor;transform:scaleX(0.8929);transform-origin:left center;">sfursov-mac</div>
<div class="t" style="left:570.60px;top:275.00px;line-height:10px;font-size:4.93px;color:#343741;-webkit-text-stroke:0.04px currentColor;transform:scaleX(0.8929);transform-origin:left center;">1</div>
<div class="t" style="left:408.50px;top:285.00px;line-height:10px;font-size:4.7px;color:#343741;-webkit-text-stroke:0.04px currentColor;transform:scaleX(0.8929);transform-origin:left center;">192.157.121.131&lt;&gt;CA-BC</div>
<div class="t" style="left:478.30px;top:285.00px;line-height:10px;font-size:5.26px;color:#343741;-webkit-text-stroke:0.04px currentColor;transform:scaleX(0.8929);transform-origin:left center;">winsrv1</div>
<div class="t" style="left:570.60px;top:286.00px;line-height:10px;font-size:4.93px;color:#343741;-webkit-text-stroke:0.04px currentColor;transform:scaleX(0.8929);transform-origin:left center;">1</div>
<div class="t" style="left:408.10px;top:335.00px;line-height:10px;font-size:5.15px;color:#3f434c;-webkit-text-stroke:0.04px currentColor;transform:scaleX(0.8929);transform-origin:left center;">Export:</div>
<div class="t" style="left:425.70px;top:335.00px;line-height:10px;font-size:5.15px;color:#2562a8;-webkit-text-stroke:0.04px currentColor;transform:scaleX(0.8929);transform-origin:left center;">Raw</div>
<svg class="b" style="left:435.70px;top:336.90px" width="4.4" height="4.4" viewBox="0 0 4.4 4.4"><path d="M1.6 0.3 H2.8 V1.7 H3.9 L2.2 3.3 L0.5 1.7 H1.6 Z" fill="#2562a8"/><rect x="0.4" y="3.5" width="3.6" height="0.75" fill="#2562a8"/></svg>
<div class="t" style="left:444.90px;top:335.00px;line-height:10px;font-size:5.15px;color:#2562a8;-webkit-text-stroke:0.04px currentColor;transform:scaleX(0.8929);transform-origin:left center;">Formatted</div>
<svg class="b" style="left:468.70px;top:336.90px" width="4.4" height="4.4" viewBox="0 0 4.4 4.4"><path d="M1.6 0.3 H2.8 V1.7 H3.9 L2.2 3.3 L0.5 1.7 H1.6 Z" fill="#2562a8"/><rect x="0.4" y="3.5" width="3.6" height="0.75" fill="#2562a8"/></svg>
<div class="t" style="left:-2.00px;top:390.00px;line-height:10px;font-size:4.95px;color:#1a1c21;font-weight:700;-webkit-text-stroke:0.08px currentColor;transform:scaleX(0.9091);transform-origin:left center;">WIN: non-info events</div>
<div class="t" style="left:303.10px;top:390.00px;line-height:10px;font-size:4.92px;color:#1a1c21;font-weight:700;-webkit-text-stroke:0.08px currentColor;transform:scaleX(0.9091);transform-origin:left center;">WIN: successful logins</div>
<div class="t" style="left:246.90px;top:401.00px;line-height:10px;font-size:5.94px;color:#535966;-webkit-text-stroke:0.04px currentColor;transform:scaleX(0.8929);transform-origin:left center;">1–1 of 1</div>
<div class="b" style="left:270.30px;top:399.60px;width:12.60px;height:10.40px;background:#f7f8fb;border-radius:0.8px;"></div>
<div class="b" style="left:285.10px;top:399.60px;width:12.60px;height:10.40px;background:#f7f8fb;border-radius:0.8px;"></div>
<svg class="b" style="left:274.90px;top:402.40px" width="3.6" height="4.8" viewBox="0 0 3.6 4.8"><polyline points="3,0.5 0.9,2.4 3,4.3" fill="none" stroke="#5a606b" stroke-width="0.9"/></svg>
<svg class="b" style="left:289.70px;top:402.40px" width="3.6" height="4.8" viewBox="0 0 3.6 4.8"><polyline points="0.6,0.5 2.7,2.4 0.6,4.3" fill="none" stroke="#5a606b" stroke-width="0.9"/></svg>
<div class="t" style="left:8.30px;top:413.00px;line-height:10px;font-size:4.79px;color:#1a1c21;font-weight:700;-webkit-text-stroke:0.08px currentColor;transform:scaleX(0.9091);transform-origin:left center;">Time</div>
<svg class="b" style="left:19.77px;top:415.80px" width="3" height="2.4" viewBox="0 0 3 2.4"><polygon points="0.2,0.4 2.8,0.4 1.5,1.9" fill="#006bb4"/></svg>
<div class="t" style="left:71.30px;top:413.00px;line-height:10px;font-size:4.79px;color:#1a1c21;font-weight:700;-webkit-text-stroke:0.08px currentColor;transform:scaleX(0.9091);transform-origin:left center;">host.name</div>
<div class="t" style="left:114.20px;top:413.00px;line-height:10px;font-size:4.79px;color:#1a1c21;font-weight:700;-webkit-text-stroke:0.08px currentColor;transform:scaleX(0.9091);transform-origin:left center;">message</div>
<div class="b" style="left:0.00px;top:422.12px;width:298.80px;height:0.55px;background:#e7e9ed;"></div>
<svg class="b" style="left:-0.40px;top:427.40px" width="2.4" height="3.6" viewBox="0 0 2.4 3.6"><polyline points="0.5,0.4 1.8,1.8 0.5,3.2" fill="none" stroke="#343741" stroke-width="0.65"/></svg>
<div class="t" style="left:8.00px;top:426.00px;line-height:10px;font-size:4.93px;color:#343741;-webkit-text-stroke:0.04px currentColor;transform:scaleX(0.8929);transform-origin:left center;">Feb 4, 2020 @ 17:37:19.229</div>
<div class="b" style="left:71.00px;top:426.40px;width:15.85px;height:5.60px;background:#fdf33c;"></div>
<div class="t" style="left:71.30px;top:425.00px;line-height:10px;font-size:5.04px;color:#1a1c21;-webkit-text-stroke:0.04px currentColor;transform:scaleX(0.8929);transform-origin:left center;">winsrv1</div>
<div class="t" style="left:114.20px;top:425.00px;line-height:10px;font-size:5.25px;color:#343741;-webkit-text-stroke:0.04px currentColor;transform:scaleX(0.8929);transform-origin:left center;">The Open Procedure for service &quot;BITS&quot; in DLL &quot;C:\Windows\System32\bitsperf.dll&quot; faile</div>
<div class="t" style="left:114.20px;top:431.00px;line-height:10px;font-size:5.25px;color:#343741;-webkit-text-stroke:0.04px currentColor;transform:scaleX(0.8929);transform-origin:left center;">d. Performance data for this service will not be available. The first four bytes (DWORD)</div>
<div class="t" style="left:114.20px;top:438.00px;line-height:10px;font-size:5.25px;color:#343741;-webkit-text-stroke:0.04px currentColor;transform:scaleX(0.8929);transform-origin:left center;">of the Data section contains the error code.</div>
<div class="t" style="left:246.90px;top:458.00px;line-height:10px;font-size:5.94px;color:#535966;-webkit-text-stroke:0.04px currentColor;transform:scaleX(0.8929);transform-origin:left center;">1–1 of 1</div>
<div class="b" style="left:270.30px;top:457.30px;width:12.60px;height:10.40px;background:#f7f8fb;border-radius:0.8px;"></div>
<div class="b" style="left:285.10px;top:457.30px;width:12.60px;height:10.40px;background:#f7f8fb;border-radius:0.8px;"></div>
<svg class="b" style="left:274.90px;top:460.10px" width="3.6" height="4.8" viewBox="0 0 3.6 4.8"><polyline points="3,0.5 0.9,2.4 3,4.3" fill="none" stroke="#5a606b" stroke-width="0.9"/></svg>
<svg class="b" style="left:289.70px;top:460.10px" width="3.6" height="4.8" viewBox="0 0 3.6 4.8"><polyline points="0.6,0.5 2.7,2.4 0.6,4.3" fill="none" stroke="#5a606b" stroke-width="0.9"/></svg>
<div class="t" style="left:548.50px;top:401.00px;line-height:10px;font-size:6.5px;color:#535966;-webkit-text-stroke:0.04px currentColor;transform:scaleX(0.8929);transform-origin:left center;">1–6 of 6</div>
<div class="b" style="left:573.80px;top:399.70px;width:12.60px;height:10.40px;background:#f7f8fb;border-radius:0.8px;"></div>
<div class="b" style="left:588.60px;top:399.70px;width:12.60px;height:10.40px;background:#f7f8fb;border-radius:0.8px;"></div>
<svg class="b" style="left:578.40px;top:402.50px" width="3.6" height="4.8" viewBox="0 0 3.6 4.8"><polyline points="3,0.5 0.9,2.4 3,4.3" fill="none" stroke="#5a606b" stroke-width="0.9"/></svg>
<svg class="b" style="left:593.20px;top:402.50px" width="3.6" height="4.8" viewBox="0 0 3.6 4.8"><polyline points="0.6,0.5 2.7,2.4 0.6,4.3" fill="none" stroke="#5a606b" stroke-width="0.9"/></svg>
<div class="t" style="left:312.00px;top:413.00px;line-height:10px;font-size:4.79px;color:#1a1c21;font-weight:700;-webkit-text-stroke:0.08px currentColor;transform:scaleX(0.9091);transform-origin:left center;">Time</div>
<svg class="b" style="left:323.47px;top:415.80px" width="3" height="2.4" viewBox="0 0 3 2.4"><polygon points="0.2,0.4 2.8,0.4 1.5,1.9" fill="#006bb4"/></svg>
<div class="t" style="left:376.30px;top:413.00px;line-height:10px;font-size:4.79px;color:#1a1c21;font-weight:700;-webkit-text-stroke:0.08px currentColor;transform:scaleX(0.9091);transform-origin:left center;">source.domain</div>
<div class="t" style="left:428.30px;top:413.00px;line-height:10px;font-size:4.79px;color:#1a1c21;font-weight:700;-webkit-text-stroke:0.08px currentColor;transform:scaleX(0.9091);transform-origin:left center;">source.ip</div>
<div class="t" style="left:472.70px;top:413.00px;line-height:10px;font-size:4.79px;color:#1a1c21;font-weight:700;-webkit-text-stroke:0.08px currentColor;transform:scaleX(0.9091);transform-origin:left center;">host.name</div>
<div class="t" style="left:520.00px;top:413.00px;line-height:10px;font-size:4.79px;color:#1a1c21;font-weight:700;-webkit-text-stroke:0.08px currentColor;transform:scaleX(0.9091);transform-origin:left center;">user.name</div>
<div class="t" style="left:567.30px;top:413.00px;line-height:10px;font-size:4.79px;color:#1a1c21;font-weight:700;-webkit-text-stroke:0.08px currentColor;transform:scaleX(0.9091);transform-origin:left center;">event.action</div>
<div class="b" style="left:300.00px;top:422.03px;width:300.00px;height:0.55px;background:#e7e9ed;"></div>
<div class="b" style="left:300.00px;top:436.33px;width:300.00px;height:0.55px;background:#e7e9ed;"></div>
<div class="b" style="left:300.00px;top:450.53px;width:300.00px;height:0.55px;background:#e7e9ed;"></div>
<div class="b" style="left:300.00px;top:464.73px;width:300.00px;height:0.55px;background:#e7e9ed;"></div>
<svg class="b" style="left:303.30px;top:427.50px" width="2.4" height="3.6" viewBox="0 0 2.4 3.6"><polyline points="0.5,0.4 1.8,1.8 0.5,3.2" fill="none" stroke="#343741" stroke-width="0.65"/></svg>
<div class="t" style="left:311.80px;top:426.00px;line-height:10px;font-size:4.92px;color:#343741;-webkit-text-stroke:0.04px currentColor;transform:scaleX(0.8929);transform-origin:left center;">Feb 4, 2020 @ 18:14:17.841</div>
<div class="t" style="left:376.30px;top:426.00px;line-height:10px;font-size:4.93px;color:#343741;-webkit-text-stroke:0.04px currentColor;transform:scaleX(0.8929);transform-origin:left center;">LANACOMPUTER</div>
<div class="t" style="left:428.30px;top:426.00px;line-height:10px;font-size:4.93px;color:#343741;-webkit-text-stroke:0.04px currentColor;transform:scaleX(0.8929);transform-origin:left center;">71.231.228.37</div>
<div class="b" style="left:472.50px;top:426.50px;width:15.85px;height:5.60px;background:#fdf33c;"></div>
<div class="t" style="left:472.80px;top:425.00px;line-height:10px;font-size:5.04px;color:#1a1c21;-webkit-text-stroke:0.04px currentColor;transform:scaleX(0.8929);transform-origin:left center;">winsrv1</div>
<div class="t" style="left:520.20px;top:426.00px;line-height:10px;font-size:4.93px;color:#343741;-webkit-text-stroke:0.04px currentColor;transform:scaleX(0.8929);transform-origin:left center;">sveta</div>
<div class="b" style="left:566.60px;top:426.50px;width:19.11px;height:5.60px;background:#fdf33c;"></div>
<div class="t" style="left:566.90px;top:425.00px;line-height:10px;font-size:5.04px;color:#1a1c21;-webkit-text-stroke:0.04px currentColor;transform:scaleX(0.8929);transform-origin:left center;">logged-in</div>
<svg class="b" style="left:303.30px;top:441.50px" width="2.4" height="3.6" viewBox="0 0 2.4 3.6"><polyline points="0.5,0.4 1.8,1.8 0.5,3.2" fill="none" stroke="#343741" stroke-width="0.65"/></svg>
<div class="t" style="left:311.80px;top:440.00px;line-height:10px;font-size:4.92px;color:#343741;-webkit-text-stroke:0.04px currentColor;transform:scaleX(0.8929);transform-origin:left center;">Feb 4, 2020 @ 18:14:17.594</div>
<div class="t" style="left:376.30px;top:440.00px;line-height:10px;font-size:4.93px;color:#343741;-webkit-text-stroke:0.04px currentColor;transform:scaleX(0.8929);transform-origin:left center;">LANACOMPUTER</div>
<div class="t" style="left:428.30px;top:440.00px;line-height:10px;font-size:4.93px;color:#343741;-webkit-text-stroke:0.04px currentColor;transform:scaleX(0.8929);transform-origin:left center;">71.231.228.37</div>
<div class="b" style="left:472.50px;top:440.50px;width:15.85px;height:5.60px;background:#fdf33c;"></div>
<div class="t" style="left:472.80px;top:439.00px;line-height:10px;font-size:5.04px;color:#1a1c21;-webkit-text-stroke:0.04px currentColor;transform:scaleX(0.8929);transform-origin:left center;">winsrv1</div>
<div class="t" style="left:520.20px;top:440.00px;line-height:10px;font-size:4.93px;color:#343741;-webkit-text-stroke:0.04px currentColor;transform:scaleX(0.8929);transform-origin:left center;">sveta</div>
<div class="b" style="left:566.60px;top:440.50px;width:19.11px;height:5.60px;background:#fdf33c;"></div>
<div class="t" style="left:566.90px;top:439.00px;line-height:10px;font-size:5.04px;color:#1a1c21;-webkit-text-stroke:0.04px currentColor;transform:scaleX(0.8929);transform-origin:left center;">logged-in</div>
<svg class="b" style="left:303.30px;top:455.50px" width="2.4" height="3.6" viewBox="0 0 2.4 3.6"><polyline points="0.5,0.4 1.8,1.8 0.5,3.2" fill="none" stroke="#343741" stroke-width="0.65"/></svg>
<div class="t" style="left:311.80px;top:454.00px;line-height:10px;font-size:4.92px;color:#343741;-webkit-text-stroke:0.04px currentColor;transform:scaleX(0.8929);transform-origin:left center;">Feb 4, 2020 @ 17:46:23.896</div>
<div class="t" style="left:376.30px;top:454.00px;line-height:10px;font-size:4.93px;color:#343741;-webkit-text-stroke:0.04px currentColor;transform:scaleX(0.8929);transform-origin:left center;">LANACOMPUTER</div>
<div class="t" style="left:428.30px;top:454.00px;line-height:10px;font-size:4.93px;color:#343741;-webkit-text-stroke:0.04px currentColor;transform:scaleX(0.8929);transform-origin:left center;">71.231.228.37</div>
<div class="b" style="left:472.50px;top:454.50px;width:15.85px;height:5.60px;background:#fdf33c;"></div>
<div class="t" style="left:472.80px;top:453.00px;line-height:10px;font-size:5.04px;color:#1a1c21;-webkit-text-stroke:0.04px currentColor;transform:scaleX(0.8929);transform-origin:left center;">winsrv1</div>
<div class="t" style="left:520.20px;top:454.00px;line-height:10px;font-size:4.93px;color:#343741;-webkit-text-stroke:0.04px currentColor;transform:scaleX(0.8929);transform-origin:left center;">sveta</div>
<div class="b" style="left:566.60px;top:454.50px;width:19.11px;height:5.60px;background:#fdf33c;"></div>
<div class="t" style="left:566.90px;top:453.00px;line-height:10px;font-size:5.04px;color:#1a1c21;-webkit-text-stroke:0.04px currentColor;transform:scaleX(0.8929);transform-origin:left center;">logged-in</div>
<svg class="b" style="left:303.30px;top:469.50px" width="2.4" height="3.6" viewBox="0 0 2.4 3.6"><polyline points="0.5,0.4 1.8,1.8 0.5,3.2" fill="none" stroke="#343741" stroke-width="0.65"/></svg>
<div class="t" style="left:311.80px;top:468.00px;line-height:10px;font-size:4.92px;color:#343741;-webkit-text-stroke:0.04px currentColor;transform:scaleX(0.8929);transform-origin:left center;">Feb 4, 2020 @ 17:46:23.866</div>
<div class="t" style="left:376.30px;top:468.00px;line-height:10px;font-size:4.93px;color:#343741;-webkit-text-stroke:0.04px currentColor;transform:scaleX(0.8929);transform-origin:left center;">LANACOMPUTER</div>
<div class="t" style="left:428.30px;top:468.00px;line-height:10px;font-size:4.93px;color:#343741;-webkit-text-stroke:0.04px currentColor;transform:scaleX(0.8929);transform-origin:left center;">71.231.228.37</div>
<div class="b" style="left:472.50px;top:468.50px;width:15.85px;height:5.60px;background:#fdf33c;"></div>
<div class="t" style="left:472.80px;top:467.00px;line-height:10px;font-size:5.04px;color:#1a1c21;-webkit-text-stroke:0.04px currentColor;transform:scaleX(0.8929);transform-origin:left center;">winsrv1</div>
<div class="t" style="left:520.20px;top:468.00px;line-height:10px;font-size:4.93px;color:#343741;-webkit-text-stroke:0.04px currentColor;transform:scaleX(0.8929);transform-origin:left center;">sveta</div>
<div class="b" style="left:566.60px;top:468.50px;width:19.11px;height:5.60px;background:#fdf33c;"></div>
<div class="t" style="left:566.90px;top:467.00px;line-height:10px;font-size:5.04px;color:#1a1c21;-webkit-text-stroke:0.04px currentColor;transform:scaleX(0.8929);transform-origin:left center;">logged-in</div>
</div></body></html>
